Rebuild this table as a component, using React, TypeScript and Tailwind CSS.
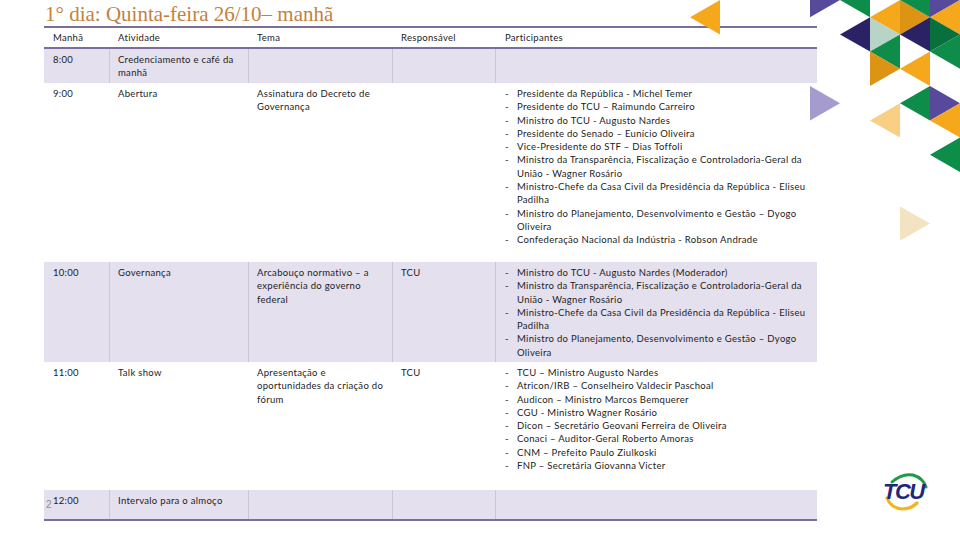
import React from "react";

type Row = {
  time: string;
  activity: string[];
  theme: string[];
  owner: string;
  people: string[][];
  shaded: boolean;
  height: string;
};

const rows: Row[] = [
  {
    time: "8:00",
    activity: ["Credenciamento e café da", "manhã"],
    theme: [],
    owner: "",
    people: [],
    shaded: true,
    height: "h-[34px]",
  },
  {
    time: "9:00",
    activity: ["Abertura"],
    theme: ["Assinatura do Decreto de", "Governança"],
    owner: "",
    people: [
      ["Presidente da República - Michel Temer"],
      ["Presidente do TCU – Raimundo Carreiro"],
      ["Ministro do TCU - Augusto Nardes"],
      ["Presidente do Senado – Eunício Oliveira"],
      ["Vice-Presidente do STF – Dias Toffoli"],
      ["Ministro da Transparência, Fiscalização e Controladoria-Geral da", "União - Wagner Rosário"],
      ["Ministro-Chefe da Casa Civil da Presidência da República - Eliseu", "Padilha"],
      ["Ministro do Planejamento, Desenvolvimento e Gestão – Dyogo", "Oliveira"],
      ["Confederação Nacional da Indústria - Robson Andrade"],
    ],
    shaded: false,
    height: "h-[179px]",
  },
  {
    time: "10:00",
    activity: ["Governança"],
    theme: ["Arcabouço normativo – a", "experiência do governo", "federal"],
    owner: "TCU",
    people: [
      ["Ministro do TCU - Augusto Nardes (Moderador)"],
      ["Ministro da Transparência, Fiscalização e Controladoria-Geral da", "União - Wagner Rosário"],
      ["Ministro-Chefe da Casa Civil da Presidência da República - Eliseu", "Padilha"],
      ["Ministro do Planejamento, Desenvolvimento e Gestão – Dyogo", "Oliveira"],
    ],
    shaded: true,
    height: "h-[100px]",
  },
  {
    time: "11:00",
    activity: ["Talk show"],
    theme: ["Apresentação e", "oportunidades da criação do", "fórum"],
    owner: "TCU",
    people: [
      ["TCU – Ministro Augusto Nardes"],
      ["Atricon/IRB – Conselheiro Valdecir Paschoal"],
      ["Audicon – Ministro Marcos Bemquerer"],
      ["CGU - Ministro Wagner Rosário"],
      ["Dicon – Secretário Geovani Ferreira de Oliveira"],
      ["Conaci – Auditor-Geral Roberto Amoras"],
      ["CNM – Prefeito Paulo Ziulkoski"],
      ["FNP – Secretária Giovanna Victer"],
    ],
    shaded: false,
    height: "h-[128px]",
  },
  {
    time: "12:00",
    activity: ["Intervalo para o almoço"],
    theme: [],
    owner: "",
    people: [],
    shaded: true,
    height: "h-[31px]",
  },
];

const Lines = ({ lines }: { lines: string[] }) => (
  <>
    {lines.map((l, i) => (
      <div key={i}>{l}</div>
    ))}
  </>
);

const Triangles = () => {
  const u = 17.2;
  const tris: [string, number[]][] = [
    ["#f5a81c", [690, u, 720, 0, 720, 2 * u]],
    ["#574a9c", [810, -u, 810, u, 840, 0]],
    ["#0e8c4a", [870, -u, 870, u, 840, 0]],
    ["#f5a81c", [870, u, 900, 0, 900, 2 * u]],
    ["#dd9414", [900, 0, 900, 2 * u, 930, u]],
    ["#0e8c4a", [930, -u, 930, u, 900, 0]],
    ["#574a9c", [930, -u, 930, u, 960, 0]],
    ["#f5a81c", [930, u, 960, 0, 960, 2 * u]],
    ["#2b2266", [840, 2 * u, 870, u, 870, 3 * u]],
    ["#b7d4c6", [870, u, 870, 3 * u, 900, 2 * u]],
    ["#2b2266", [900, 2 * u, 930, u, 930, 3 * u]],
    ["#08703c", [930, u, 930, 3 * u, 960, 2 * u]],
    ["#0e8c4a", [870, 3 * u, 900, 2 * u, 900, 4 * u]],
    ["#0e8c4a", [930, 3 * u, 960, 2 * u, 960, 4 * u]],
    ["#dd9414", [870, 3 * u, 870, 5 * u, 900, 4 * u]],
    ["#f5a81c", [900, 4 * u, 930, 3 * u, 930, 5 * u]],
    ["#0e8c4a", [900, 6 * u, 930, 5 * u, 930, 7 * u]],
    ["#574a9c", [930, 5 * u, 930, 7 * u, 960, 6 * u]],
    ["#f5a81c", [930, 7 * u, 960, 6 * u, 960, 8 * u]],
    ["#f9cf86", [870, 7 * u, 900, 6 * u, 900, 8 * u]],
    ["#0e8c4a", [930, 9 * u, 960, 8 * u, 960, 10 * u]],
    ["#a59ccd", [810, 5 * u, 810, 7 * u, 840, 6 * u]],
    ["#f4e3c1", [900, 12 * u, 900, 14 * u, 930, 13 * u]],
  ];
  return (
    <svg
      className="absolute left-[680px] top-0 pointer-events-none"
      width={280}
      height={250}
      viewBox="680 0 280 250"
    >
      {tris.map(([c, p], i) => (
        <polygon key={i} points={p.join(" ")} fill={c} />
      ))}
    </svg>
  );
};

const TcuLogo = () => (
  <div className="absolute left-[880px] top-[470px] w-[54px] h-[44px]">
    <svg className="absolute left-0 top-0" width={54} height={44} viewBox="0 0 54 44">
      <path d="M12 12 Q22 3 33 5 Q43 8 46 17" fill="none" stroke="#1f9a48" strokeWidth={3} strokeLinecap="round" />
      <path d="M7 28 Q11 38 22 39 Q31 39 37 33" fill="none" stroke="#f2b51c" strokeWidth={3.2} strokeLinecap="round" />
    </svg>
    <span className="absolute left-[3px] top-[12px] text-[22px] leading-[20px] font-black italic text-[#1e2877] tracking-[-1.5px] [font-family:'Liberation_Sans',Arial,sans-serif]">
      TCU
    </span>
  </div>
);

export default function App() {
  return (
    <div className="relative w-[960px] h-[540px] overflow-hidden bg-white text-[#1c1c1c] [font-family:Lato,'Liberation_Sans',sans-serif]">
      <div className="pl-[45px] pt-[2px] h-[26px] text-[21px] leading-[24px] text-[#c4823b] [font-family:'Liberation_Serif','Times_New_Roman',serif]">
        1° dia: Quinta-feira 26/10– manhã
      </div>

      <div className="ml-[44px] w-[773px] text-[9.5px] leading-[13.3px] tracking-[0.3px]">
        <div className="grid grid-cols-[66px_139px_144px_103px_321px] h-[23px] border-y-2 border-[#7b6d9c] items-center pt-[1px]">
          <div className="pl-[9px]">Manhã</div>
          <div className="pl-[8px]">Atividade</div>
          <div className="pl-[8px]">Tema</div>
          <div className="pl-[8px]">Responsável</div>
          <div className="pl-[9px]">Participantes</div>
        </div>

        {rows.map((r, i) => (
          <div
            key={i}
            className={`grid grid-cols-[66px_139px_144px_103px_321px] ${r.height} ${
              r.shaded ? "bg-[#e4e0ee]" : "bg-transparent"
            } ${i === rows.length - 1 ? "border-b-2 border-[#7b6d9c]" : ""}`}
          >
            <div className={`pl-[9px] pt-[4px] ${r.shaded ? "border-r border-[#cbc6d8]" : ""}`}>{r.time}</div>
            <div className={`pl-[8px] pt-[4px] ${r.shaded ? "border-r border-[#cbc6d8]" : ""}`}>
              <Lines lines={r.activity} />
            </div>
            <div className={`pl-[8px] pt-[4px] ${r.shaded ? "border-r border-[#cbc6d8]" : ""}`}>
              <Lines lines={r.theme} />
            </div>
            <div className={`pl-[8px] pt-[4px] ${r.shaded ? "border-r border-[#cbc6d8]" : ""}`}>{r.owner}</div>
            <div className="pl-[9px] pt-[4px]">
              {r.people.map((p, j) => (
                <div key={j} className="flex">
                  <span className="w-[12px] shrink-0">-</span>
                  <div>
                    <Lines lines={p} />
                  </div>
                </div>
              ))}
            </div>
          </div>
        ))}
      </div>

      <span className="absolute left-[46px] top-[497px] text-[10px] text-[#8b8b8b] [font-family:'Liberation_Sans',Arial,sans-serif]">
        2
      </span>

      <Triangles />
      <TcuLogo />
    </div>
  );
}
